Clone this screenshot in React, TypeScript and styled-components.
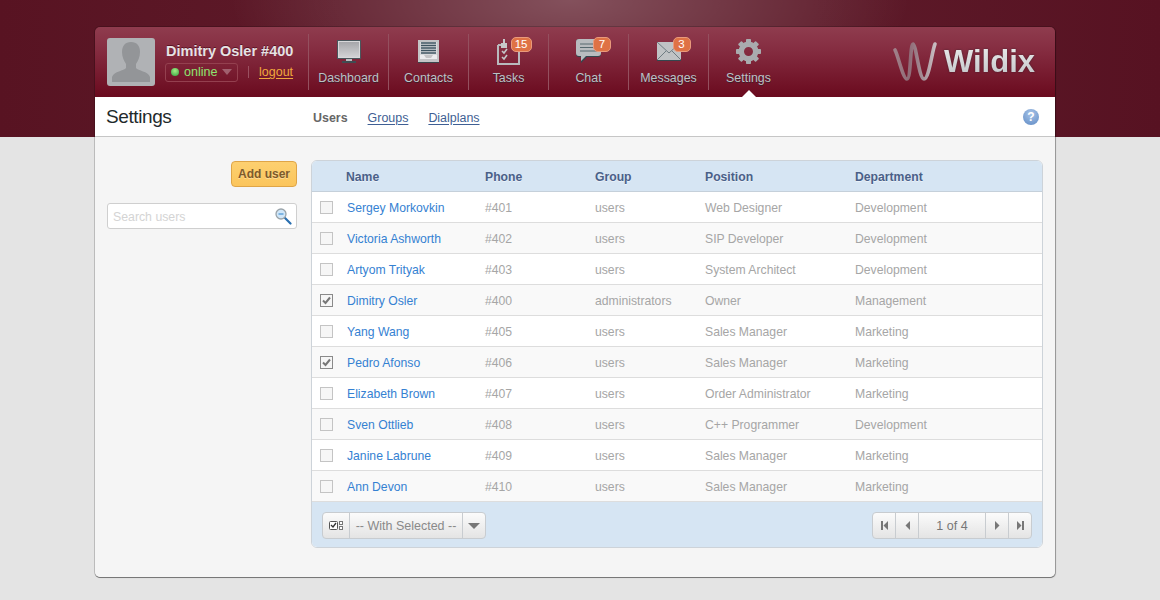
import styled, { createGlobalStyle } from "styled-components";

const GlobalStyle = createGlobalStyle`
  html, body {
    margin: 0;
    padding: 0;
  }
  body {
    min-height: 600px;
    font-family: "Liberation Sans", Arial, sans-serif;
    background-color: #e4e4e4;
    background-image:
      radial-gradient(ellipse 340px 120px at 570px 0, rgba(255, 255, 255, 0.24), rgba(255, 255, 255, 0) 100%),
      linear-gradient(90deg, #581322, #5d1a29 30%, #5d1a29 70%, #571222);
    background-size: 100% 137px;
    background-repeat: no-repeat;
  }
`;

interface User {
  name: string;
  phone: string;
  group: string;
  position: string;
  department: string;
  checked?: boolean;
}

const users: User[] = [
  { name: "Sergey Morkovkin", phone: "#401", group: "users", position: "Web Designer", department: "Development" },
  { name: "Victoria Ashworth", phone: "#402", group: "users", position: "SIP Developer", department: "Development" },
  { name: "Artyom Trityak", phone: "#403", group: "users", position: "System Architect", department: "Development" },
  { name: "Dimitry Osler", phone: "#400", group: "administrators", position: "Owner", department: "Management", checked: true },
  { name: "Yang Wang", phone: "#405", group: "users", position: "Sales Manager", department: "Marketing" },
  { name: "Pedro Afonso", phone: "#406", group: "users", position: "Sales Manager", department: "Marketing", checked: true },
  { name: "Elizabeth Brown", phone: "#407", group: "users", position: "Order Administrator", department: "Marketing" },
  { name: "Sven Ottlieb", phone: "#408", group: "users", position: "C++ Programmer", department: "Development" },
  { name: "Janine Labrune", phone: "#409", group: "users", position: "Sales Manager", department: "Marketing" },
  { name: "Ann Devon", phone: "#410", group: "users", position: "Sales Manager", department: "Marketing" },
];

function MonitorIcon() {
  return (
    <svg width="24" height="23" viewBox="0 0 24 23">
      <defs>
        <linearGradient id="mon" x1="0" y1="0" x2="0" y2="1">
          <stop offset="0" stopColor="#a6a6aa" />
          <stop offset="1" stopColor="#d2d2d4" />
        </linearGradient>
      </defs>
      <rect x="0.5" y="0.5" width="23" height="18" fill="#d8d8da" stroke="#4a565c" />
      <rect x="2" y="2" width="20" height="15" fill="url(#mon)" />
      <rect x="9" y="19" width="6" height="2" fill="#bdbdc0" />
      <rect x="5" y="21" width="14" height="2" fill="#3f4c52" />
    </svg>
  );
}

function ContactsIcon() {
  return (
    <svg width="22" height="23" viewBox="0 0 22 23">
      <rect x="0" y="0" width="21" height="22" fill="#c4c4c6" />
      <rect x="0" y="22" width="21" height="1" fill="#3a464c" />
      <rect x="2" y="2" width="17" height="13" fill="#d8dadc" />
      <path d="M3 3h15M3 5.500h15M3 8h15M3 10.500h15M3 13h15" stroke="#3f5561" strokeWidth="1.300" />
      <path d="M2 15h4l2 3h5l2-3h4v4H2z" fill="#ececee" />
    </svg>
  );
}

function TasksIcon() {
  return (
    <svg width="24" height="26" viewBox="0 0 24 26">
      <path d="M1 6h5M15 6h7v19H1V6" fill="none" stroke="#b8babd" strokeWidth="2" />
      <rect x="6" y="0" width="2" height="8" fill="#c8c8ca" />
      <rect x="4" y="4" width="6" height="5" fill="#c8c8ca" />
      <path d="M5 12l2 2 3-4M5 18l2 2 3-4" fill="none" stroke="#c4c6c8" strokeWidth="1.600" />
    </svg>
  );
}

function ChatIcon() {
  return (
    <svg width="25" height="25" viewBox="0 0 25 25">
      <path d="M3 0h19a3 3 0 0 1 3 3v12a3 3 0 0 1-3 3H11l-6 6v-6H3a3 3 0 0 1-3-3V3a3 3 0 0 1 3-3z" fill="#33474f" />
      <path d="M3 0h19a3 3 0 0 1 3 3v11a3 3 0 0 1-3 3H10l-5 5v-5H3a3 3 0 0 1-3-3V3a3 3 0 0 1 3-3z" fill="#b8bcbf" />
      <path d="M4 5h14M4 8.500h17M4 12h17" stroke="#56696f" strokeWidth="1" />
    </svg>
  );
}

function EnvelopeIcon() {
  return (
    <svg width="24" height="19" viewBox="0 0 24 19">
      <rect x="0" y="0" width="24" height="18" fill="#c0c3c5" />
      <rect x="0" y="18" width="24" height="1" fill="#33474f" />
      <path d="M0 0l12 11L24 0M0 18l9-9M24 18l-9-9" fill="none" stroke="#6f7c82" strokeWidth="1" />
    </svg>
  );
}

function GearIcon() {
  const teeth = [0, 45, 90, 135, 180, 225, 270, 315];
  return (
    <svg width="25" height="25" viewBox="0 0 25 25">
      <circle cx="12.500" cy="12.500" r="7.200" fill="none" stroke="#a9abae" strokeWidth="5.400" />
      {teeth.map((deg) => (
        <rect key={deg} x="10" y="0" width="5" height="5" rx="0.800" fill="#a9abae" transform={`rotate(${deg} 12.500 12.500)`} />
      ))}
    </svg>
  );
}

function SearchIcon() {
  return (
    <svg width="17" height="17" viewBox="0 0 17 17">
      <path d="M10 10l5.500 5.500" stroke="#2a6fb0" strokeWidth="2.200" strokeLinecap="round" />
      <circle cx="6" cy="6" r="5" fill="#d0e6f8" stroke="#9aa3a9" strokeWidth="1.300" />
      <path d="M3.500 6h5" stroke="#5a9ed8" strokeWidth="1.400" />
    </svg>
  );
}

function CheckMark() {
  return (
    <svg width="11" height="11" viewBox="0 0 11 11">
      <path d="M2 5.500l2.500 2.500L9 2.500" fill="none" stroke="#777777" strokeWidth="2" />
    </svg>
  );
}

function Avatar() {
  return (
    <AvatarBox>
      <svg width="48" height="48" viewBox="0 0 48 48">
        <path d="M24 4c-6 0-9 4-9 10 0 5 2 9 4 12v4c-2 3-12 3-14 9v5h38v-5c-2-6-12-6-14-9v-4c2-3 4-7 4-12 0-6-3-10-9-10z" fill="#939598" />
      </svg>
    </AvatarBox>
  );
}

function Logo() {
  return (
    <LogoBox>
      <svg width="46" height="42" viewBox="0 0 46 42">
        <defs>
          <linearGradient id="wmark" x1="0" y1="0" x2="1" y2="0">
            <stop offset="0" stopColor="#a08089" />
            <stop offset="0.350" stopColor="#8f6a76" />
            <stop offset="0.700" stopColor="#a58f97" />
            <stop offset="1" stopColor="#c8bcc1" />
          </linearGradient>
        </defs>
        <path
          d="M3 9C6 14 11 38 15 38C19 38 18 3 21 3C24 3 27 38 32 38C37 38 40 10 43 3"
          fill="none"
          stroke="url(#wmark)"
          strokeWidth="3.600"
          strokeLinecap="round"
        />
      </svg>
      <LogoText>Wildix</LogoText>
    </LogoBox>
  );
}

function App() {
  return (
    <>
      <GlobalStyle />
      <Shell>
        <Header>
          <Avatar />
          <UserInfo>
            <UserName>Dimitry Osler #400</UserName>
            <StatusRow>
              <StatusPill>
                <StatusDot />
                online
                <PillCaret />
              </StatusPill>
              <Logout>logout</Logout>
            </StatusRow>
          </UserInfo>
          <Nav>
            <NavItem>
              <NavIcon><MonitorIcon /></NavIcon>
              <NavLabel>Dashboard</NavLabel>
            </NavItem>
            <NavItem>
              <NavIcon><ContactsIcon /></NavIcon>
              <NavLabel>Contacts</NavLabel>
            </NavItem>
            <NavItem>
              <NavIcon>
                <TasksIcon />
                <Badge $right={-11}>15</Badge>
              </NavIcon>
              <NavLabel>Tasks</NavLabel>
            </NavItem>
            <NavItem>
              <NavIcon>
                <ChatIcon />
                <Badge $right={-10}>7</Badge>
              </NavIcon>
              <NavLabel>Chat</NavLabel>
            </NavItem>
            <NavItem>
              <NavIcon>
                <EnvelopeIcon />
                <Badge $right={-10}>3</Badge>
              </NavIcon>
              <NavLabel>Messages</NavLabel>
            </NavItem>
            <NavItem $active>
              <NavIcon><GearIcon /></NavIcon>
              <NavLabel>Settings</NavLabel>
            </NavItem>
          </Nav>
          <Logo />
        </Header>

        <SubBar>
          <PageTitle>Settings</PageTitle>
          <Tabs>
            <ActiveTab>Users</ActiveTab>
            <TabLink>Groups</TabLink>
            <TabLink>Dialplans</TabLink>
          </Tabs>
          <HelpButton>?</HelpButton>
        </SubBar>

        <Content>
          <Sidebar>
            <AddButton>Add user</AddButton>
            <SearchBox>
              <SearchInput placeholder="Search users" />
              <SearchIcon />
            </SearchBox>
          </Sidebar>

          <TablePanel>
            <HeadRow>
              <span />
              <span>Name</span>
              <span>Phone</span>
              <span>Group</span>
              <span>Position</span>
              <span>Department</span>
            </HeadRow>
            {users.map((u) => (
              <Row key={u.phone}>
                <Check $checked={u.checked}>{u.checked && <CheckMark />}</Check>
                <NameCell>{u.name}</NameCell>
                <span>{u.phone}</span>
                <span>{u.group}</span>
                <span>{u.position}</span>
                <span>{u.department}</span>
              </Row>
            ))}
            <Footer>
              <ButtonGroup>
                <GroupCell $width={26}>
                  <svg width="15" height="11" viewBox="0 0 15 11">
                    <rect x="0.500" y="1.500" width="8" height="8" rx="1" fill="#fff" stroke="#555" />
                    <path d="M2 5l2 2 3-4" fill="none" stroke="#333" strokeWidth="1.300" />
                    <rect x="10.500" y="1.500" width="3" height="3" fill="#fff" stroke="#777" />
                    <rect x="10.500" y="6.500" width="3" height="3" fill="#fff" stroke="#777" />
                  </svg>
                </GroupCell>
                <GroupCell $width={113}>-- With Selected --</GroupCell>
                <GroupCell $width={23}><DownCaret /></GroupCell>
              </ButtonGroup>
              <ButtonGroup>
                <GroupCell $width={22}>
                  <svg width="9" height="9" viewBox="0 0 9 9"><path d="M1 0h2v9H1zM8 0v9L3.500 4.500z" fill="#777" /></svg>
                </GroupCell>
                <GroupCell $width={23}>
                  <svg width="9" height="9" viewBox="0 0 9 9"><path d="M7 0v9L2.500 4.500z" fill="#777" /></svg>
                </GroupCell>
                <GroupCell $width={67}><PageText>1 of 4</PageText></GroupCell>
                <GroupCell $width={23}>
                  <svg width="9" height="9" viewBox="0 0 9 9"><path d="M2 0v9l4.500-4.500z" fill="#777" /></svg>
                </GroupCell>
                <GroupCell $width={23}>
                  <svg width="9" height="9" viewBox="0 0 9 9"><path d="M1 0v9l4.500-4.500zM6 0h2v9H6z" fill="#777" /></svg>
                </GroupCell>
              </ButtonGroup>
            </Footer>
          </TablePanel>
        </Content>
      </Shell>
    </>
  );
}

const Shell = styled.div`
  width: 960px;
  margin: 27px 0 0 95px;
  border-radius: 5px;
  box-shadow: 0 1px 0 0 #777777, 0 0 0 1px rgba(0, 0, 0, 0.18), 1px 1px 1px rgba(0, 0, 0, 0.2);
`;

const Header = styled.header`
  height: 70px;
  display: flex;
  align-items: center;
  padding-left: 12px;
  border-radius: 5px 5px 0 0;
  background: linear-gradient(180deg, #8f3c4e 0%, #862e42 30%, #6a0a1e 100%);
`;

const AvatarBox = styled.div`
  width: 48px;
  height: 48px;
  flex: none;
  border-radius: 3px;
  overflow: hidden;
  background: #b0b2b5;
  svg {
    display: block;
  }
`;

const UserInfo = styled.div`
  width: 142px;
  margin-left: 10px;
  flex: none;
`;

const UserName = styled.div`
  margin: 0 0 3px 1px;
  font-size: 14.500px;
  line-height: 17px;
  font-weight: 700;
  color: #e6e2e4;
  text-shadow: 0 -1px 0 rgba(60, 0, 15, 0.6);
  white-space: nowrap;
`;

const StatusRow = styled.div`
  display: flex;
  align-items: center;
`;

const StatusPill = styled.div`
  width: 73px;
  height: 19px;
  box-sizing: border-box;
  padding-left: 5px;
  display: flex;
  align-items: center;
  border: 1px solid #94404f;
  border-radius: 3px;
  font-size: 12.500px;
  color: #8ee36e;
`;

const StatusDot = styled.span`
  width: 8px;
  height: 8px;
  margin-right: 5px;
  border-radius: 50%;
  background: radial-gradient(circle at 50% 35%, #a5ee86, #2f9e3c);
`;

const PillCaret = styled.span`
  width: 0;
  height: 0;
  margin-left: 5px;
  border-left: 5px solid transparent;
  border-right: 5px solid transparent;
  border-top: 6px solid #a0606e;
`;

const Logout = styled.a`
  margin-left: 10px;
  padding-left: 10px;
  border-left: 1px solid #9a5060;
  height: 12px;
  line-height: 12px;
  font-size: 12.500px;
  color: #f0a83c;
  text-decoration: underline;
  text-underline-offset: 2px;
`;

const Nav = styled.nav`
  display: flex;
  align-items: stretch;
  height: 56px;
  margin-left: 1px;
`;

const NavItem = styled.div<{ $active?: boolean }>`
  position: relative;
  width: 80px;
  box-sizing: border-box;
  display: flex;
  flex-direction: column;
  align-items: center;
  border-left: 1px solid #94505f;

  ${(props) =>
    props.$active &&
    `
    &::after {
      content: "";
      position: absolute;
      left: 33px;
      bottom: -7px;
      width: 0;
      height: 0;
      border-left: 7px solid transparent;
      border-right: 7px solid transparent;
      border-bottom: 7px solid #fff;
    }
  `}
`;

const NavIcon = styled.div`
  position: relative;
  height: 29px;
  margin-top: 3px;
  display: flex;
  align-items: center;
  justify-content: center;
  svg {
    display: block;
  }
`;

const NavLabel = styled.span`
  margin-top: 4px;
  font-size: 12.400px;
  line-height: 16px;
  color: #bcc1c6;
  text-shadow: 0 1px 0 rgba(40, 30, 40, 0.7);
  white-space: nowrap;
`;

const Badge = styled.span<{ $right: number }>`
  position: absolute;
  top: 0;
  right: ${(props) => props.$right}px;
  min-width: 18px;
  height: 15px;
  box-sizing: border-box;
  padding: 0 3px;
  border: 1px solid #e99a7c;
  border-radius: 5px;
  background: #df7245;
  color: #fff;
  font-size: 11.500px;
  line-height: 13px;
  text-align: center;
`;

const LogoBox = styled.div`
  margin-left: auto;
  margin-right: 20px;
  display: flex;
  align-items: center;
  svg {
    display: block;
    margin-right: 6px;
  }
`;

const LogoText = styled.span`
  font-size: 31px;
  line-height: 36px;
  font-weight: 700;
  background: linear-gradient(180deg, #eceded, #bfc1c5);
  -webkit-background-clip: text;
  background-clip: text;
  -webkit-text-fill-color: transparent;
  filter: drop-shadow(0 0 1px rgba(50, 30, 40, 0.7));
`;

const SubBar = styled.div`
  height: 40px;
  box-sizing: border-box;
  display: flex;
  align-items: center;
  padding: 0 16px 0 11px;
  background: #fff;
  border-bottom: 1px solid #c6c6c6;
`;

const PageTitle = styled.h1`
  width: 207px;
  margin: 0;
  flex: none;
  font-size: 19px;
  font-weight: 400;
  letter-spacing: -0.400px;
  color: #1f2a2c;
`;

const Tabs = styled.div`
  display: flex;
  gap: 20px;
  padding-top: 2px;
  font-size: 12.450px;
`;

const ActiveTab = styled.span`
  font-weight: 700;
  color: #666;
`;

const TabLink = styled.a`
  color: #3f5f94;
  text-decoration: underline;
  text-underline-offset: 2px;
`;

const HelpButton = styled.div`
  width: 16px;
  height: 16px;
  margin-left: auto;
  border-radius: 50%;
  background: radial-gradient(circle at 50% 30%, #a8c4e8, #5f8ac4);
  color: #fff;
  font-size: 12px;
  line-height: 16px;
  font-weight: 700;
  text-align: center;
`;

const Content = styled.main`
  height: 440px;
  box-sizing: border-box;
  display: flex;
  gap: 14px;
  padding: 23px 12px 0;
  background: #f5f5f5;
  border-radius: 0 0 5px 5px;
`;

const Sidebar = styled.aside`
  width: 190px;
  flex: none;
  display: flex;
  flex-direction: column;
  align-items: flex-end;
`;

const AddButton = styled.button`
  width: 66px;
  height: 26px;
  margin-top: 1px;
  padding: 0;
  border: 1px solid #dfa547;
  border-radius: 4px;
  background: linear-gradient(180deg, #fdd070, #fbc55c);
  color: #7d5a2a;
  font-family: inherit;
  font-size: 12px;
  font-weight: 700;
  text-shadow: 0 1px 0 rgba(255, 255, 255, 0.35);
`;

const SearchBox = styled.div`
  width: 190px;
  height: 26px;
  box-sizing: border-box;
  margin-top: 16px;
  padding: 1px 4px 0 5px;
  display: flex;
  align-items: center;
  border: 1px solid #cfcfcf;
  border-radius: 3px;
  background: #fff;
`;

const SearchInput = styled.input`
  flex: 1;
  min-width: 0;
  padding: 1px 0 0;
  border: none;
  outline: none;
  background: transparent;
  font-family: inherit;
  font-size: 12.300px;
  &::placeholder {
    color: #d4d4d4;
    opacity: 1;
  }
`;

const TablePanel = styled.section`
  width: 732px;
  height: 388px;
  box-sizing: border-box;
  border: 1px solid #cdd3d9;
  border-radius: 6px;
  overflow: hidden;
  background: #fff;
`;

const columns = "35px 138px 110px 110px 150px 1fr";

const HeadRow = styled.div`
  height: 31px;
  box-sizing: border-box;
  padding-top: 1px;
  display: grid;
  grid-template-columns: ${columns};
  align-items: center;
  background: #d6e5f3;
  border-bottom: 1px solid #c5d0da;
  font-size: 12.200px;
  font-weight: 700;
  color: #4a6088;
  text-shadow: 0 1px 0 rgba(255, 255, 255, 0.5);
  span:nth-child(2) {
    margin-left: -1px;
  }
`;

const Row = styled.div`
  height: 31px;
  box-sizing: border-box;
  padding-top: 2px;
  display: grid;
  grid-template-columns: ${columns};
  align-items: center;
  border-bottom: 1px solid #dddddd;
  font-size: 12.200px;
  color: #a6a6a6;
  background: #fff;
  &:nth-child(odd) {
    background: #f9f9f9;
  }
`;

const Check = styled.span<{ $checked?: boolean }>`
  width: 13px;
  height: 13px;
  box-sizing: border-box;
  margin: -2px 0 0 8px;
  border: 1px solid ${(props) => (props.$checked ? "#8a8a8a" : "#c4c4c4")};
  background: #f6f6f6;
  svg {
    display: block;
  }
`;

const NameCell = styled.span`
  color: #3581d2;
`;

const Footer = styled.div`
  height: 45px;
  box-sizing: border-box;
  padding: 10px 10px 0;
  display: flex;
  justify-content: space-between;
  background: #d6e5f3;
`;

const ButtonGroup = styled.div`
  height: 27px;
  box-sizing: border-box;
  display: flex;
  border: 1px solid #c8ccd0;
  border-radius: 4px;
  background: linear-gradient(180deg, #fbfbfb, #e4e4e4);
  font-size: 12.500px;
  color: #8a8a8a;
`;

const GroupCell = styled.div<{ $width: number }>`
  width: ${(props) => props.$width}px;
  box-sizing: border-box;
  display: flex;
  align-items: center;
  justify-content: center;
  white-space: nowrap;
  & + & {
    border-left: 1px solid #c8ccd0;
  }
`;

const DownCaret = styled.span`
  width: 0;
  height: 0;
  border-left: 6px solid transparent;
  border-right: 6px solid transparent;
  border-top: 6px solid #777;
`;

const PageText = styled.span`
  color: #777;
`;

export default App;
